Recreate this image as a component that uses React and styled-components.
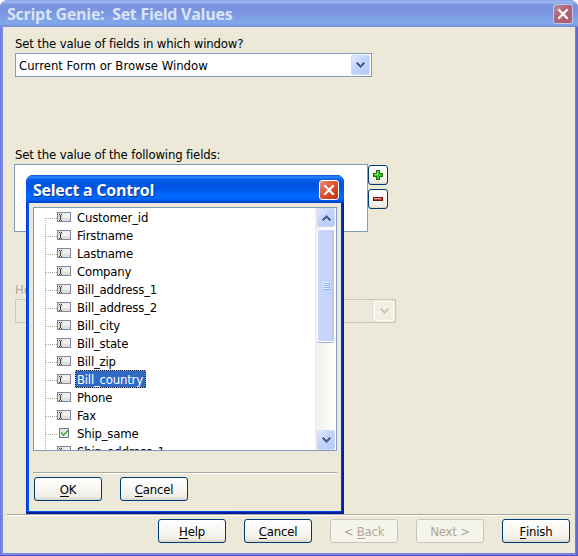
import React from "react";
import styled, { createGlobalStyle, css } from "styled-components";

const Global = createGlobalStyle`
  *, *::before, *::after { box-sizing: border-box; }
  body { margin: 0; overflow: hidden; background: #fff; }
  button { margin: 0; padding: 0; font: inherit; }
`;

const Window = styled.main`
  position: relative;
  width: 578px;
  height: 556px;
  padding: 0 3px 3px;
  background: linear-gradient(90deg, #6b77d8, #7b8be4 2px, #7583df 575px, #5560c8);
  border-radius: 8px 8px 0 0;
  box-shadow: inset 0 -1px #5058c0;
  overflow: hidden;
  font: 13px/18px "DejaVu Sans Condensed", "DejaVu Sans", sans-serif;
  color: #000;
`;

const TitleBar = styled.header`
  display: flex;
  justify-content: space-between;
  height: ${(p) => (p.$active ? 28 : 27)}px;
  margin: 0 -3px;
  padding: ${(p) => (p.$active ? "5px 5px 0 7px" : "4px 5px 0 7px")};
  background: ${(p) =>
    p.$active
      ? "linear-gradient(#0a50d8 0, #2c88fc 2px, #0b62ee 4px, #0055e0 8px, #0056e5 14px, #0068fc 20px, #0064f8 24px, #0040cc 28px)"
      : "linear-gradient(#8ba0e8 0, #9db8ef 2px, #7b93df 5px, #7b95e0 13px, #80a4e9 20px, #80a5e8 24px, #748bda 27px)"};
  color: ${(p) => (p.$active ? "#fff" : "#d8e4f8")};
`;

const Title = styled.h1`
  margin: 0;
  font: 700 16px/21px "Open Sans", "Noto Sans", sans-serif;
  letter-spacing: ${(p) => p.$spacing}px;
  white-space: pre;
  text-shadow: ${(p) => (p.$active ? "1px 1px #0b308c" : "none")};
`;

const CloseButton = styled.button`
  display: grid;
  place-items: center;
  width: 20px;
  height: 20px;
  border: 1px solid ${(p) => (p.$active ? "#fff" : "#c1c8ee")};
  border-radius: 3px;
  background: ${(p) =>
    p.$active
      ? "linear-gradient(135deg, #ec9278, #e0532f 45%, #bd3410)"
      : "linear-gradient(135deg, #b7909f, #b16274 45%, #a95c72)"};
`;

const Body = styled.section`
  display: flex;
  flex-direction: column;
  height: 526px;
  padding: 7px 4px 0 12px;
  background: #ece9d8;
`;

const Label = styled.label`
  display: block;
  flex: none;
  height: 19px;
  line-height: 19px;
  color: ${(p) => (p.$disabled ? "#aca899" : "#000")};
  letter-spacing: ${(p) => p.$spacing || 0}px;
  white-space: nowrap;
`;

const Combo = styled.div`
  display: flex;
  flex: none;
  justify-content: space-between;
  width: ${(p) => p.$width}px;
  height: 24px;
  padding: 1px 1px 1px 3px;
  border: 1px solid ${(p) => (p.$disabled ? "#c9c7ba" : "#7f9db9")};
  background: ${(p) => (p.$disabled ? "#ece9d8" : "#fff")};
  line-height: 21px;
  letter-spacing: ${(p) => p.$spacing || 0}px;
`;

const Arrow = styled.button`
  display: grid;
  flex: none;
  place-items: center;
  width: ${(p) => p.$width || 19}px;
  height: ${(p) => p.$height || 20}px;
  border: 1px solid ${(p) => (p.$disabled ? "#fff" : "#cbd9fb")};
  border-radius: 2px;
  color: ${(p) => (p.$disabled ? "#c9c7ba" : "#4d6185")};
  background: ${(p) => (p.$disabled ? "#f1efe4" : "linear-gradient(135deg, #e1eaff, #c2d3fc 45%, #b6cbf8)")};
`;

const Fields = styled.div`
  display: flex;
  flex: none;
  margin-left: -1px;
`;

const FieldBox = styled.div`
  width: 354px;
  height: 68px;
  border: 1px solid #7f9db9;
  background: #fff;
`;

const SideButtons = styled.div`
  display: flex;
  flex-direction: column;
  gap: 4px;
  padding-top: 1px;
`;

const raised = css`
  border: 1px solid #003c74;
  border-radius: 3px;
  background: linear-gradient(#fff, #f5f4ee 65%, #ecebe4 88%, #d8d2c6);
`;

const SmallButton = styled.button`
  ${raised}
  display: grid;
  place-items: center;
  width: 20px;
  height: 20px;
`;

const Gap = styled.div`
  flex: none;
  height: ${(p) => p.$size}px;
`;

const Rule = styled.hr`
  flex: none;
  width: ${(p) => p.$width}px;
  height: 2px;
  margin: 0 0 0 ${(p) => p.$offset || 0}px;
  border: 0;
  border-top: 1px solid #aca899;
  background: #fff;
`;

const Actions = styled.footer`
  display: flex;
  flex: none;
  justify-content: ${(p) => p.$align || "flex-start"};
  gap: 18px;
  padding: 3px 1px 0;
`;

const PushButton = styled.button`
  ${raised}
  width: 68px;
  height: 24px;
  line-height: 21px;
  color: #000;
  letter-spacing: -0.2px;
  &:disabled {
    border-color: #c9c7ba;
    background: #f5f4ea;
    color: #aca899;
  }
`;

const Key = styled.span`
  display: inline-block;
  height: 16px;
  line-height: 17px;
  border-bottom: 1px solid currentColor;
`;

const Dialog = styled.section`
  position: absolute;
  left: 26px;
  top: 175px;
  width: 318px;
  height: 339px;
  padding: 0 3px 3px;
  border-radius: 7px 7px 0 0;
  overflow: hidden;
  background: linear-gradient(90deg, #0831d9, #0055e5 2px, #0046d5 315px, #001ea0 317px);
  box-shadow: inset 0 -2px #001ea0;
`;

const DialogBody = styled.div`
  display: flex;
  flex-direction: column;
  height: 308px;
  padding: 4px 4px 0;
  background: #ece9d8;
`;

const ListFrame = styled.div`
  display: flex;
  flex: none;
  justify-content: space-between;
  width: 304px;
  height: 244px;
  padding-right: 1px;
  border: 1px solid #7f9db9;
  background: #fff;
  overflow: hidden;
`;

const Tree = styled.ul`
  flex: 1;
  margin: 0;
  padding: 0;
  list-style: none;
  overflow: hidden;
`;

const Row = styled.li`
  display: flex;
  align-items: center;
  height: 18px;
  padding-left: 11px;
`;

const Drawing = styled.svg`
  display: block;
  flex: none;
  shape-rendering: crispEdges;
`;

const Name = styled.span`
  height: 18px;
  margin-left: 3px;
  padding: 0 ${(p) => (p.$selected ? 2 : 1)}px 0 1px;
  line-height: ${(p) => (p.$selected ? 17 : 19)}px;
  border: 1px dotted ${(p) => (p.$selected ? "#f0a040" : "transparent")};
  border-width: ${(p) => (p.$selected ? 1 : 0)}px 1px;
  background: ${(p) =>
    p.$selected
      ? "linear-gradient(#316ac5, #316ac5) padding-box, linear-gradient(#101828, #101828) border-box"
      : "transparent"};
  color: ${(p) => (p.$selected ? "#fff" : "#000")};
  letter-spacing: ${(p) => p.$spacing}px;
`;

const Scroll = styled.div`
  display: flex;
  flex-direction: column;
  align-items: center;
  width: 20px;
  padding-left: 1px;
  border-left: 1px solid #eeede5;
  background: linear-gradient(90deg, #f1f0eb, #fefefb);
`;

const Thumb = styled.div`
  display: grid;
  place-items: center;
  width: 18px;
  height: 113px;
  margin: 2px 0 auto;
  border: 1px solid #fff;
  border-radius: 2px;
  box-shadow: 0 1px #9cb3e8;
  background: linear-gradient(90deg, #c9d7fd, #c6d3fc 75%, #b5c7f2);
`;

const Chevron = ({ up }) => (
  <Drawing width="9" height="6" viewBox="0 0 9 6">
    <path
      fill="currentColor"
      transform={up ? "matrix(1 0 0 -1 0 6)" : undefined}
      d="M0 1h1V0h1v1h1v1h1v1h1V2h1V1h1V0h1v1h1v1H8v1H7v1H6v1H5v1H4V5H3V4H2V3H1V2H0z"
    />
  </Drawing>
);

const Cross = () => (
  <svg width="12" height="12" viewBox="0 0 12 12">
    <path d="M1.3 1.3l9.4 9.4M10.7 1.3l-9.4 9.4" stroke="#fff" strokeWidth="2.3" />
  </svg>
);

const Node = ({ checked, first }) => (
  <Drawing width="27" height="18" viewBox="0 0 27 18">
    <path d={first ? "M.5 10v8" : "M.5 0v18"} stroke="#aca899" strokeDasharray="1 1" />
    <path d="M1 10.500h11" stroke="#aca899" strokeDasharray="1 1" />
    {checked ? (
      <>
        <path d="M12 10h2v1h-2z" fill="#fff" />
        <path d="M14.500 4.500h9v9h-9z" fill="#e6e6e4" stroke="#77778f" />
        <path d="M16 8h1v1h1v1h1V9h1V8h1V7h1V6h1v2h-1v1h-1v1h-1v1h-1v1h-1v-1h-1v-1h-1z" fill="#32b332" />
      </>
    ) : (
      <>
        <path d="M12.500 4.500h13v9h-13z" fill="#e0dfdc" stroke="#85859f" />
        <path d="M18 5h7v5h-7z" fill="#f0f0ed" />
        <path d="M14 6.500h1m1 0h1M15.500 7v5M14 12.500h1m1 0h1" stroke="#3c3c3c" />
      </>
    )}
  </Drawing>
);

const rows = [
  "Customer_id", "Firstname", "Lastname", "Company",
  "Bill_address_1", "Bill_address_2", "Bill_city", "Bill_state",
  "Bill_zip", "Bill_country", "Phone", "Fax",
  "Ship_same", "Ship_address_1",
];

export default function App() {
  return (
    <Window>
      <Global />
      <TitleBar>
        <Title $spacing={-0.27}>Script Genie:  Set Field Values</Title>
        <CloseButton aria-label="Close"><Cross /></CloseButton>
      </TitleBar>
      <Body>
        <Label $spacing={-0.15}>Set the value of fields in which window?</Label>
        <Combo $width={357} $spacing={0}>
          Current Form or Browse Window
          <Arrow><Chevron /></Arrow>
        </Combo>
        <Gap $size={68} />
        <Label $spacing={-0.15}>Set the value of the following fields:</Label>
        <Fields>
          <FieldBox />
          <SideButtons>
            <SmallButton aria-label="Add">
              <Drawing width="10" height="10" viewBox="0 0 10 10">
                <path d="M3.500.5h3v3h3v3h-3v3h-3v-3h-3v-3h3z" fill="#3fc62f" stroke="#17701a" />
                <path d="M4.500 2v3M2 4.500h3" stroke="#a5eb91" />
              </Drawing>
            </SmallButton>
            <SmallButton aria-label="Remove">
              <Drawing width="10" height="4" viewBox="0 0 10 4">
                <path d="M.5.500h9v3h-9z" fill="#bd4a42" stroke="#74140f" />
                <path d="M1 1.500h7" stroke="#eaa39b" />
              </Drawing>
            </SmallButton>
          </SideButtons>
        </Fields>
        <Gap $size={48} />
        <Label $disabled>How</Label>
        <Combo $width={381} $disabled>
          <span />
          <Arrow $disabled $width={20}><Chevron /></Arrow>
        </Combo>
        <Gap $size={191} />
        <Rule $width={564} $offset={-8} />
        <Actions $align="flex-end">
          <PushButton><Key>H</Key>elp</PushButton>
          <PushButton><Key>C</Key>ancel</PushButton>
          <PushButton disabled>&lt; <Key>B</Key>ack</PushButton>
          <PushButton disabled>Next &gt;</PushButton>
          <PushButton><Key>F</Key>inish</PushButton>
        </Actions>
      </Body>
      <Dialog role="dialog">
        <TitleBar $active>
          <Title $active $spacing={-0.27}>Select a Control</Title>
          <CloseButton $active aria-label="Close"><Cross /></CloseButton>
        </TitleBar>
        <DialogBody>
          <ListFrame>
            <Tree>
              {rows.map((name, i) => (
                <Row key={name}>
                  <Node first={i === 0} checked={name === "Ship_same"} />
                  <Name $spacing={-0.2} $selected={name === "Bill_country"}>{name}</Name>
                </Row>
              ))}
            </Tree>
            <Scroll>
              <Arrow $width={18} $height={19}><Chevron up /></Arrow>
              <Thumb>
                <Drawing width="7" height="8" viewBox="0 0 7 8">
                  <path d="M0 .5h6M0 2.500h6M0 4.500h6M0 6.500h6" stroke="#eef4fe" />
                  <path d="M1 1.500h6M1 3.500h6M1 5.500h6M1 7.500h6" stroke="#8cb0f8" />
                </Drawing>
              </Thumb>
              <Arrow $width={18} $height={20}><Chevron /></Arrow>
            </Scroll>
          </ListFrame>
          <Gap $size={21} />
          <Rule $width={304} />
          <Actions>
            <PushButton><Key>O</Key>K</PushButton>
            <PushButton><Key>C</Key>ancel</PushButton>
          </Actions>
        </DialogBody>
      </Dialog>
    </Window>
  );
}
